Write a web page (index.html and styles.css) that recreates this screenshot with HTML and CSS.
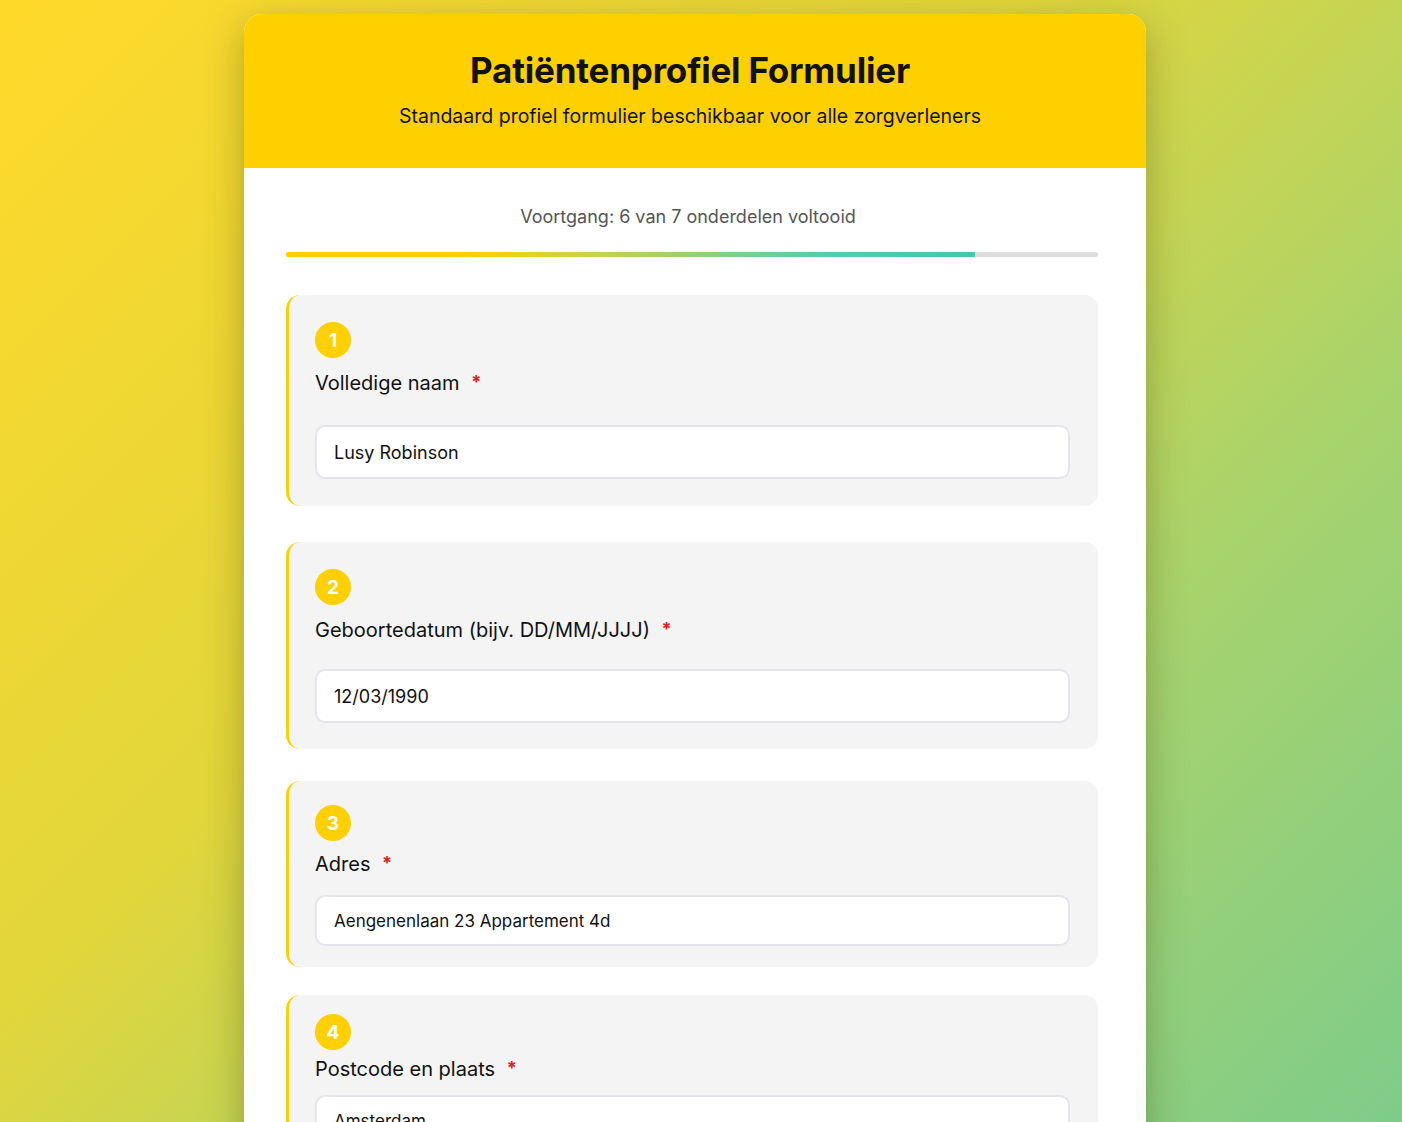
FILE: index.html
```html
<!DOCTYPE html>
<html lang="nl">
<head>
<meta charset="utf-8">
<title>Patiëntenprofiel Formulier</title>
<link rel="stylesheet" href="styles.css">
</head>
<body>
<main class="card">
  <header class="card-header">
    <h1 class="title">Patiëntenprofiel Formulier</h1>
    <p class="subtitle">Standaard profiel formulier beschikbaar voor alle zorgverleners</p>
  </header>
  <div class="card-body">
    <div class="progress">
      <p class="progress-text">Voortgang: 6 van 7 onderdelen voltooid</p>
      <div class="progress-track"><div class="progress-fill" style="width: 84.9%"></div></div>
    </div>
    <section class="field f1">
      <span class="badge">1</span>
      <label class="label" for="naam">Volledige naam <span class="req">*</span></label>
      <input class="input" id="naam" type="text" value="Lusy Robinson">
    </section>
    <section class="field f2">
      <span class="badge">2</span>
      <label class="label" for="geb">Geboortedatum (bijv. DD/MM/JJJJ) <span class="req">*</span></label>
      <input class="input" id="geb" type="text" value="12/03/1990">
    </section>
    <section class="field f3">
      <span class="badge">3</span>
      <label class="label" for="adres">Adres <span class="req">*</span></label>
      <input class="input" id="adres" type="text" value="Aengenenlaan 23 Appartement 4d">
    </section>
    <section class="field f4">
      <span class="badge">4</span>
      <label class="label" for="plaats">Postcode en plaats <span class="req">*</span></label>
      <input class="input" id="plaats" type="text" value="Amsterdam">
    </section>
  </div>
</main>
</body>
</html>
```
FILE: styles.css
```css
html, body {
  margin: 0;
  height: 100%;
}
body {
  font-family: Inter, "Noto Sans", "Liberation Sans", sans-serif;
  background: linear-gradient(135deg, #ffd92a 0%, #e2d63b 40%, #a8d36c 70%, #7ecc8a 100%);
  padding: 14px 12px 0 0;
  box-sizing: border-box;
  overflow: hidden;
  color: #111;
}
.card {
  width: 902px;
  margin: 0 auto;
  background: #fff;
  border-radius: 18px 18px 0 0;
  box-shadow: 0 12px 40px rgba(60, 60, 0, 0.35);
  overflow: hidden;
  min-height: 1200px;
}
.card-header {
  background: #ffd000;
  height: 154px;
  box-sizing: border-box;
  padding: 35px 10px 0 0;
  text-align: center;
}
.title {
  margin: 0;
  font-size: 35px;
  font-weight: 700;
  line-height: 42px;
  color: #111;
  letter-spacing: -0.2px;
}
.subtitle {
  margin: 13px 0 0;
  font-size: 19.5px;
  line-height: 24px;
  color: #111;
}
.card-body {
  padding: 38px 48px 0 42px;
}
.progress-text {
  margin: 0 8px 0 0;
  text-align: center;
  font-size: 18px;
  line-height: 22px;
  color: #555;
}
.progress-track {
  margin-top: 24px;
  height: 5px;
  border-radius: 3px;
  background: #dcdcdc;
  overflow: hidden;
}
.progress-fill {
  height: 100%;
  background: linear-gradient(90deg, #ffd000 0%, #ffd000 25%, #c9d24a 45%, #80cf8a 65%, #4ecdb0 80%, #40c9ae 100%);
}
.field {
  margin-top: 38px;
  background: #f4f4f5;
  border-left: 3px solid #ffd000;
  border-radius: 14px;
  padding: 27px 28px 27px 26px;
  display: flex;
  flex-direction: column;
  align-items: flex-start;
}
.badge {
  width: 36px;
  height: 36px;
  border-radius: 50%;
  background: #ffd000;
  color: #fff;
  font-weight: 700;
  font-size: 19px;
  display: flex;
  align-items: center;
  justify-content: center;
}
.label {
  margin-top: 11px;
  font-size: 20px;
  line-height: 26px;
  color: #111;
}
.req {
  color: #e02020;
  margin-left: 6px;
  font-size: 18px;
  font-weight: 700;
  vertical-align: 2px;
}
.input {
  margin-top: 27px;
  width: 100%;
  box-sizing: border-box;
  height: 54px;
  border: 2px solid #e4e4ea;
  border-radius: 10px;
  background: #fff;
  padding: 0 17px;
  font-family: inherit;
  font-size: 18px;
  color: #111;
}
.f1 .input { margin-top: 29px; }
.f2 { margin-top: 36px; padding-bottom: 26px; }
.f2 .input { margin-top: 26px; }
.f3 { margin-top: 32px; padding-top: 24px; padding-bottom: 21px; }
.f3 .label { margin-top: 9px; }
.f3 .input { margin-top: 18px; height: 51px; font-size: 17px; }
.f4 { margin-top: 28px; padding-top: 19px; }
.f4 .label { margin-top: 5px; }
.f4 .input { margin-top: 13px; height: 52px; font-size: 17px; }
```
